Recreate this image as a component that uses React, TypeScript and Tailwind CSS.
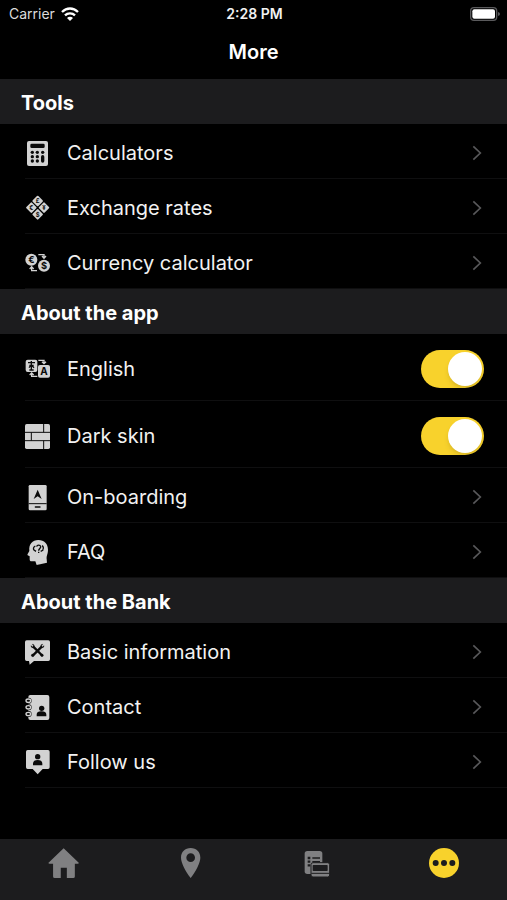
import { useState } from 'react';
import type { ReactNode } from 'react';

const DARK = '#0a0a0a';

const icons: Record<string, ReactNode> = {
  calculators: (
    <>
      <rect x="6" width="63" height="75" rx="6" />
      <g fill={DARK}>
        <rect x="16" y="8" width="43" height="13" rx="4" />
        {[34, 47, 60].map((y) => (
          <g key={y}>
            <circle cx="22" cy={y} r="5" />
            <circle cx="37" cy={y} r="5" />
          </g>
        ))}
        <circle cx="53" cy="34" r="5" />
        <rect x="48" y="42" width="10" height="23" rx="5" />
      </g>
    </>
  ),
  exchange: (
    <g transform="translate(0 -3)">
      {[[38, 18, '£'], [19, 38, '€'], [57, 38, '¥'], [38, 58, '$']].map(([x, y, sign]) => (
        <g key={sign} transform={`translate(${x} ${y})`}>
          <rect x="-12" y="-12" width="24" height="24" rx="3" transform="rotate(45)" />
          <text y="7" fontSize="18" fontWeight="700" textAnchor="middle" fill={DARK}>{sign}</text>
        </g>
      ))}
    </g>
  ),
  currency: (
    <g transform="translate(0 -4)">
      <circle cx="19" cy="30" r="18" />
      <circle cx="57" cy="48" r="18" />
      <text x="19" y="40" fontSize="28" fontWeight="700" textAnchor="middle" fill={DARK}>€</text>
      <text x="57" y="58" fontSize="28" fontWeight="700" textAnchor="middle" fill={DARK}>$</text>
      <path d="M40 15H57V24M51 19L57 26L63 19M36 63H20V53M14 58L20 51L26 58" fill="none" stroke="currentColor" strokeWidth="4" />
    </g>
  ),
  language: (
    <g transform="translate(0 -3)">
      <rect x="2" y="11" width="35" height="37" rx="6" />
      <rect x="39" y="27" width="36" height="38" rx="6" />
      <path d="M9 20H30M19 15V20M13 28H26M19 20V42M13 42H26M12 35L19 27L27 35" fill="none" stroke={DARK} strokeWidth="4" />
      <text x="57" y="56" fontSize="30" fontWeight="700" textAnchor="middle" fill={DARK}>A</text>
      <path d="M40 13H57V21M51 17L57 23L63 17M37 61H20V53M14 57L20 51L26 57" fill="none" stroke="currentColor" strokeWidth="4" />
    </g>
  ),
  skin: (
    <>
      <rect width="75" height="75" rx="5" />
      <path d="M0 25H75M0 50H75M56 0V25M19 25V50M56 50V75" stroke={DARK} strokeWidth="3" fill="none" />
    </>
  ),
  onboarding: (
    <>
      <rect x="11" width="54" height="76" rx="4" />
      <path d="M11 56H65" stroke={DARK} strokeWidth="3" />
      <path d="M31 66H45" stroke={DARK} strokeWidth="4" strokeLinecap="round" />
      <path d="M38 14L50 42L38 34L26 42Z" fill={DARK} />
    </>
  ),
  faq: (
    <>
      <path d="M40 0C58 0 69 12 69 29C69 42 64 47 65 57L66 68L35 75L31 64H20C15 64 14 61 14 57V49L8 46C7 45 7 44 8 42L13 33C11 12 22 0 40 0Z" />
      <g fill="none" stroke={DARK} strokeWidth="4">
        <path d="M35 20C36 14 46 14 47 20C48 25 41 26 41 32M41 35V39" />
        <path d="M31 18C25 21 24 26 27 30L33 34M51 17C56 20 56 25 53 30M47 34L55 30" />
      </g>
    </>
  ),
  info: (
    <>
      <path d="M5 1H70Q75 1 75 6V58Q75 63 70 63H27L14 74L12 63H5Q0 63 0 58V6Q0 1 5 1Z" />
      <g stroke={DARK} fill={DARK}>
        <path d="M24 19L50 45M51 19L24 46" strokeWidth="7" strokeLinecap="round" />
        <circle cx="23" cy="18" r="5" />
        <circle cx="52" cy="18" r="5" />
        <circle cx="51" cy="46" r="4" />
        <circle cx="23" cy="46" r="4" />
      </g>
      <path d="M17 12L24 19M58 12L51 19" stroke="currentColor" strokeWidth="4" />
    </>
  ),
  contact: (
    <>
      <rect x="10" width="63" height="75" rx="6" />
      {[17, 37, 57].map((y) => (
        <g key={y}>
          <circle cx="11" cy={y} r="9" fill={DARK} />
          <ellipse cx="10" cy={y} rx="7" ry="5" fill="none" stroke="currentColor" strokeWidth="4" />
        </g>
      ))}
      <circle cx="50" cy="40" r="8" fill={DARK} />
      <path d="M35 64V59C35 51 42 49 50 49C58 49 64 51 64 59V64Z" fill={DARK} />
    </>
  ),
  follow: (
    <>
      <path d="M8 0H69Q74 0 74 5V52Q74 57 69 57H53L38 73L23 57H8Q3 57 3 52V5Q3 0 8 0Z" />
      <circle cx="38" cy="20" r="8" fill={DARK} />
      <path d="M24 46V41C24 33 30 30 38 30C46 30 52 33 52 41V46Z" fill={DARK} />
    </>
  ),
};

const sections = [
  {
    title: 'Tools',
    items: [
      { label: 'Calculators', icon: 'calculators' },
      { label: 'Exchange rates', icon: 'exchange' },
      { label: 'Currency calculator', icon: 'currency' },
    ],
  },
  {
    title: 'About the app',
    items: [
      { label: 'English', icon: 'language', toggle: true },
      { label: 'Dark skin', icon: 'skin', toggle: true },
      { label: 'On-boarding', icon: 'onboarding' },
      { label: 'FAQ', icon: 'faq' },
    ],
  },
  {
    title: 'About the Bank',
    items: [
      { label: 'Basic information', icon: 'info' },
      { label: 'Contact', icon: 'contact' },
      { label: 'Follow us', icon: 'follow' },
    ],
  },
];

const tabs = [
  {
    label: 'Home',
    icon: (
      <svg viewBox="-4 0 100 98" className="size-8" fill="currentColor">
        <path d="M48 3L96 49Q94 52 90 51H83V91Q83 96 78 96H58V64H39V96H20Q15 96 15 91V51H6Q2 52 0 49Z" />
      </svg>
    ),
  },
  {
    label: 'Branches',
    icon: (
      <svg viewBox="-2 0 96 96" className="size-8" fill="currentColor">
        <path fillRule="evenodd" d="M48 3C65 3 77 15 77 32C77 47 64 73 48 93C32 73 19 47 19 32C19 15 31 3 48 3ZM48 19A13 13 0 1 0 48 45A13 13 0 1 0 48 19Z" />
      </svg>
    ),
  },
  {
    label: 'Products',
    icon: (
      <svg viewBox="0 0 96 96" className="size-8" fill="currentColor">
        <rect x="11" y="12" width="53" height="69" rx="8" />
        <g stroke="#1c1c1e" strokeWidth="4">
          <path d="M34 33H57M34 44H57M34 55H57" />
          <path d="M20 33H28M20 44H28M20 55H28" strokeWidth="7" />
        </g>
        <rect x="30" y="47" width="56" height="43" rx="6" stroke="#1c1c1e" strokeWidth="3" />
        <rect x="35" y="54" width="45" height="18" rx="2" fill="#1c1c1e" />
        <path d="M31 79H85" stroke="#1c1c1e" strokeWidth="3" />
      </svg>
    ),
  },
  {
    label: 'More',
    icon: (
      <svg viewBox="0 0 96 96" className="size-8" fill="currentColor">
        <circle cx="48" cy="48" r="45" />
        <g fill="#1c1c1e">
          <circle cx="23" cy="48" r="9" />
          <circle cx="48" cy="48" r="9" />
          <circle cx="73" cy="48" r="9" />
        </g>
      </svg>
    ),
  },
];

function StatusBar() {
  return (
    <div className="grid grid-cols-3 items-center pl-[9px] pr-[7px] h-7 text-sm">
      <div className="flex items-center gap-1.5">
        <span className="text-[#dcdcdc]">Carrier</span>
        <svg viewBox="0 0 54 42" className="w-[18px] h-[14px]" fill="none" stroke="#fff" strokeWidth="7">
          <path d="M3 15C17 1 37 1 51 15" />
          <path d="M12 25C20 17 34 17 42 25" />
          <path d="M27 42L18 33C23 28 31 28 36 33Z" fill="#fff" stroke="none" />
        </svg>
      </div>
      <span className="text-center font-semibold">2:28 PM</span>
      <svg viewBox="0 0 90 42" className="justify-self-end w-[30px] h-[14px]">
        <rect x="2" y="2" width="78" height="38" rx="10" fill="none" stroke="#5a5a5c" strokeWidth="4" />
        <rect x="7" y="7" width="68" height="28" rx="6" fill="#fff" />
        <path d="M84 15Q90 17 90 21Q90 25 84 27Z" fill="#5a5a5c" />
      </svg>
    </div>
  );
}

function Chevron() {
  return (
    <svg viewBox="0 0 30 48" className="w-[10px] h-4 mr-[25px]" fill="none" stroke="#58585a" strokeWidth="5">
      <path d="M4 4L25 24L4 44" />
    </svg>
  );
}

function RowIcon({ name }: { name: string }) {
  return (
    <svg viewBox="0 0 75 75" className="size-[25px] shrink-0 overflow-visible text-[#d2d2d2]" fill="currentColor" aria-hidden="true">
      {icons[name]}
    </svg>
  );
}

export default function App() {
  const [enabled, setEnabled] = useState<Record<string, boolean>>({ English: true, 'Dark skin': true });
  const [activeTab, setActiveTab] = useState('More');

  return (
    <div className="min-h-screen flex flex-col bg-black text-[#f2f2f2] font-['Inter','Liberation_Sans',sans-serif]">
      <header>
        <StatusBar />
        <h1 className="h-[51px] pt-2.5 text-center text-xl leading-7 font-semibold text-white">More</h1>
      </header>

      <main className="flex-1">
        {sections.map((section) => (
          <section key={section.title}>
            <h2 className="flex items-center h-[45px] pt-0.5 px-[21px] bg-[#1c1c1e] text-xl font-bold text-white">
              {section.title}
            </h2>
            <ul>
              {section.items.map((item) => (
                <li key={item.label} className="ml-[25px] border-b border-[#0f0f10]">
                  {item.toggle ? (
                    <label className="flex items-center gap-[17px] h-[66px] pt-1 text-xl">
                      <RowIcon name={item.icon} />
                      <span className="flex-1">{item.label}</span>
                      <input
                        type="checkbox"
                        role="switch"
                        checked={enabled[item.label]}
                        onChange={(e) => setEnabled({ ...enabled, [item.label]: e.target.checked })}
                        className="appearance-none mr-[23px] flex items-center w-[63px] h-[38px] p-0.5 rounded-full bg-[#39393d] checked:bg-[#f8d22c] before:content-[''] before:size-[34px] before:rounded-full before:bg-white before:shadow-md checked:before:ml-[25px]"
                      />
                    </label>
                  ) : (
                    <button className="flex w-full items-center gap-[17px] h-[54px] pt-1 text-left text-xl">
                      <RowIcon name={item.icon} />
                      <span className="flex-1">{item.label}</span>
                      <Chevron />
                    </button>
                  )}
                </li>
              ))}
            </ul>
          </section>
        ))}
      </main>

      <nav className="grid grid-cols-4 h-[61px] bg-[#1c1c1e]">
        {tabs.map((tab) => (
          <button
            key={tab.label}
            aria-label={tab.label}
            onClick={() => setActiveTab(tab.label)}
            className={`flex justify-center pt-2 ${activeTab === tab.label ? 'text-[#f8d22c]' : 'text-[#808082]'}`}
          >
            {tab.icon}
          </button>
        ))}
      </nav>
    </div>
  );
}
